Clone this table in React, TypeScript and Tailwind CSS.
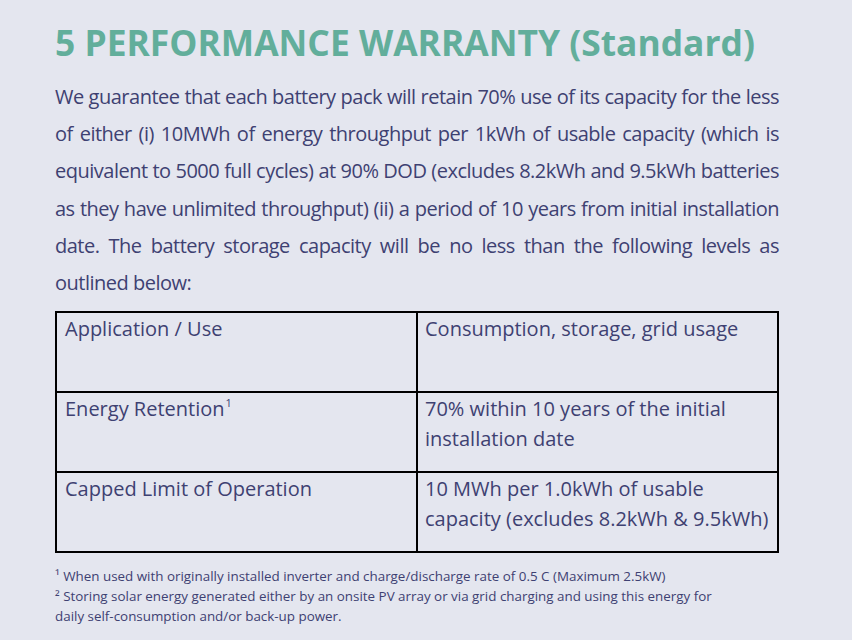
import React from "react";

const bodyLines = [
  "We guarantee that each battery pack will retain 70% use of its capacity for the less",
  "of either (i) 10MWh of energy throughput per 1kWh of usable capacity (which is",
  "equivalent to 5000 full cycles) at 90% DOD (excludes 8.2kWh and 9.5kWh batteries",
  "as they have unlimited throughput) (ii) a period of 10 years from initial installation",
  "date. The battery storage capacity will be no less than the following levels as",
];

export default function App() {
  const font = { fontFamily: '"Open Sans", "Noto Sans", sans-serif' };
  return (
    <div
      className="w-[852px] h-[640px] bg-[#e4e6ef] text-[#3e4172] overflow-hidden"
      style={font}
    >
      <div className="pl-[55px] pr-[73px] pt-[20px]">
        <h1 className="text-[35.4px] leading-[44px] font-bold text-[#62ae9b] whitespace-nowrap">
          5 PERFORMANCE WARRANTY (Standard)
        </h1>
        <div className="mt-[14px] w-[724px] text-[20px] leading-[37.2px] tracking-[-0.5px]">
          {bodyLines.map((l) => (
            <div key={l} className="text-justify [text-align-last:justify] whitespace-nowrap">
              {l}
            </div>
          ))}
          <div>outlined below:</div>
        </div>
        <table className="mt-[10px] w-[724px] border-collapse text-[20px] leading-[30px]">
          <tbody>
            <tr className="h-[80px]">
              <td className="w-[361px] border-2 border-black align-top px-[8px] pt-[1px]">
                Application / Use
              </td>
              <td className="border-2 border-black align-top px-[7px] pt-[1px]">
                Consumption, storage, grid usage
              </td>
            </tr>
            <tr className="h-[80px]">
              <td className="border-2 border-black align-top px-[8px] pt-[1px]">
                Energy Retention<sup className="text-[11px] top-[-9px] ml-[1px]">1</sup>
              </td>
              <td className="border-2 border-black align-top px-[7px] pt-[1px]">
                70% within 10 years of the initial
                <br />
                installation date
              </td>
            </tr>
            <tr className="h-[80px]">
              <td className="border-2 border-black align-top px-[8px] pt-[1px]">
                Capped Limit of Operation
              </td>
              <td className="border-2 border-black align-top px-[7px] pt-[1px]">
                10 MWh per 1.0kWh of usable
                <br />
                capacity (excludes 8.2kWh &amp; 9.5kWh)
              </td>
            </tr>
          </tbody>
        </table>
        <div className="mt-[13px] text-[13.4px] leading-[20px] w-[672px]">
          <p>¹ When used with originally installed inverter and charge/discharge rate of 0.5 C (Maximum 2.5kW)</p>
          <p>
            ² Storing solar energy generated either by an onsite PV array or via grid charging and using this energy for
            <br />
            daily self-consumption and/or back-up power.
          </p>
        </div>
      </div>
    </div>
  );
}
